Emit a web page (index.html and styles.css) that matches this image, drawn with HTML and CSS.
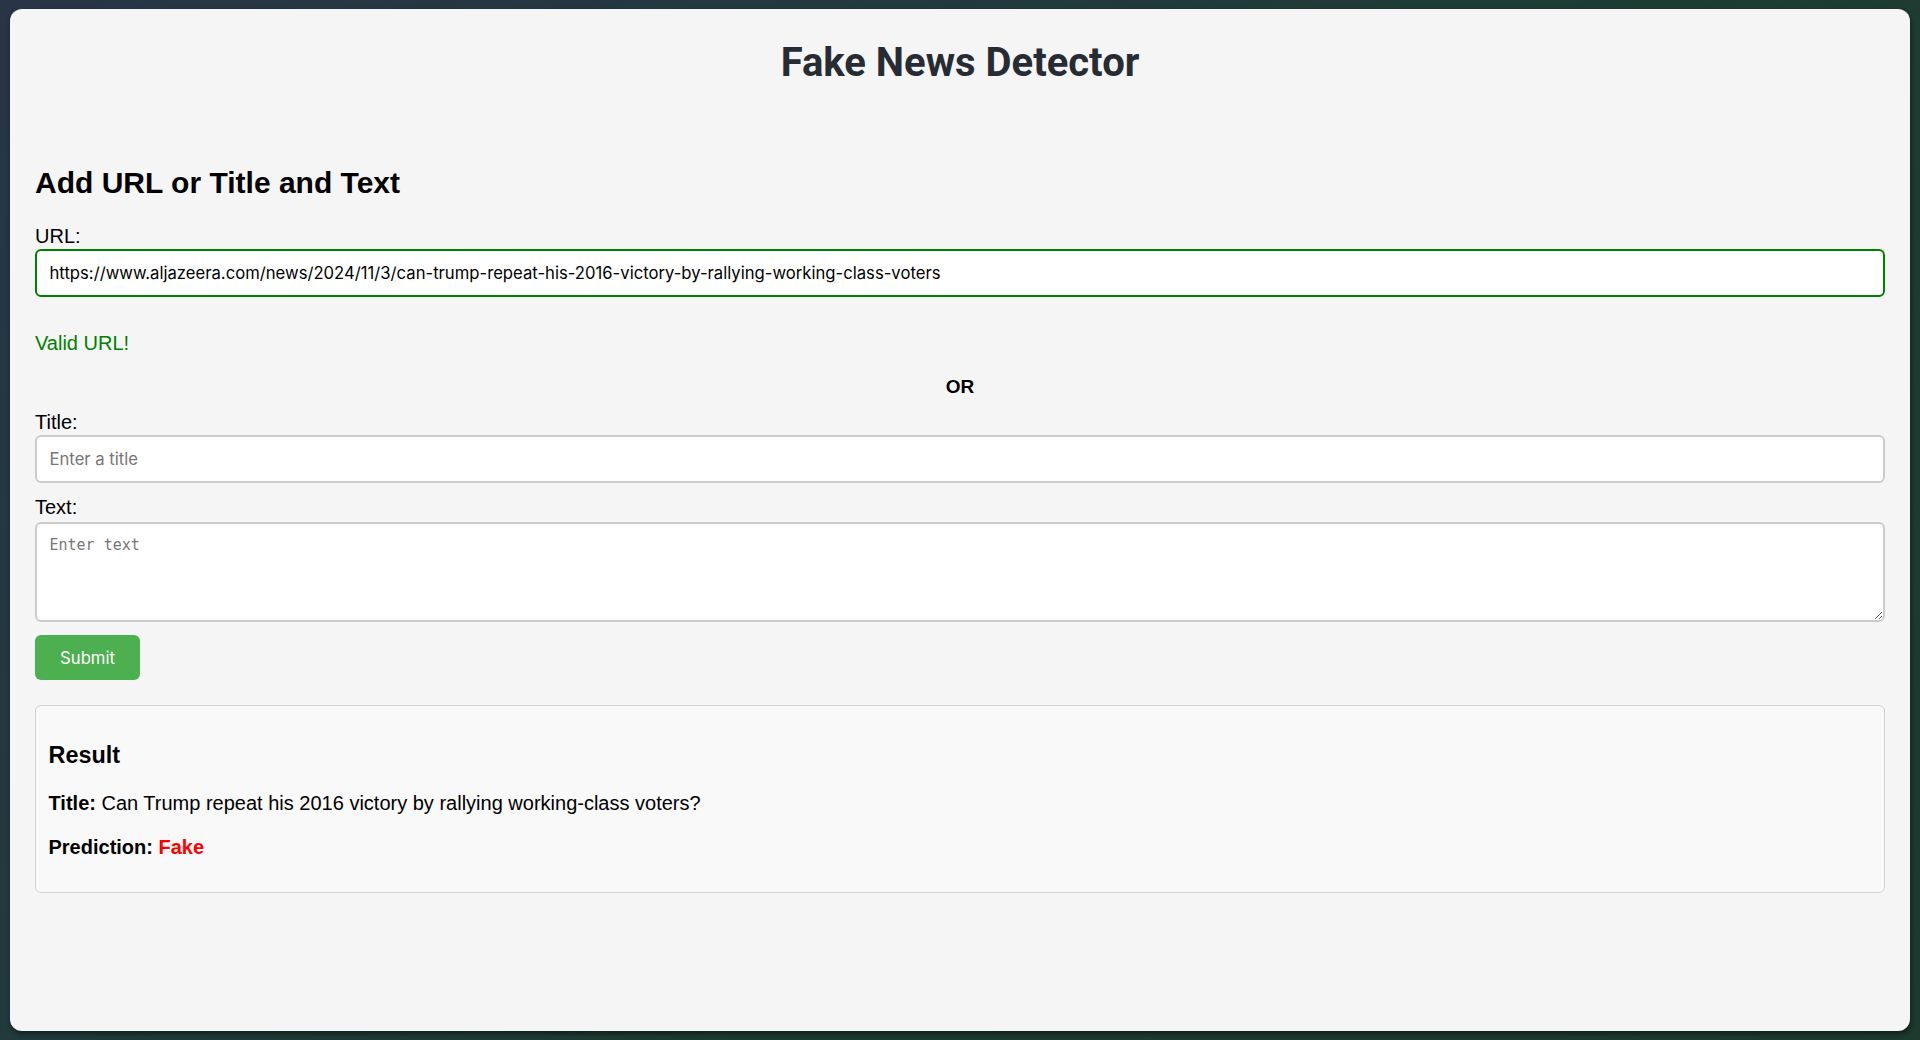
FILE: index.html
```html
<!DOCTYPE html>
<html lang="en">
<head>
<meta charset="utf-8">
<title>Fake News Detector</title>
<link rel="stylesheet" href="styles.css">
</head>
<body>
<div class="app">
  <h1 class="app-title">Fake News Detector</h1>
  <h2 class="section-title">Add URL or Title and Text</h2>
  <form class="news-form">
    <label class="field-label" for="url">URL:</label>
    <input class="text-input url-input" id="url" type="text" value="https://www.aljazeera.com/news/2024/11/3/can-trump-repeat-his-2016-victory-by-rallying-working-class-voters">
    <p class="valid-msg">Valid URL!</p>
    <div class="or-sep">OR</div>
    <label class="field-label label-title" for="title">Title:</label>
    <input class="text-input title-input" id="title" type="text" placeholder="Enter a title">
    <label class="field-label label-text" for="text">Text:</label>
    <textarea class="text-area" id="text" placeholder="Enter text"></textarea>
    <button class="submit-btn" type="button">Submit</button>
  </form>
  <div class="result">
    <h3 class="result-title">Result</h3>
    <p class="result-line"><strong>Title:</strong> Can Trump repeat his 2016 victory by rallying working-class voters?</p>
    <p class="result-line"><strong>Prediction:</strong> <span class="fake">Fake</span></p>
  </div>
</div>
</body>
</html>
```

FILE: styles.css
```css
html, body {
  margin: 0;
  padding: 0;
  height: 100%;
}

body {
  background: linear-gradient(135deg, #293447 0%, #213a3c 35%, #1e3c31 60%, #1d3a2f 100%);
  font-family: "Liberation Sans", Arial, sans-serif;
  font-size: 20px;
  color: #000;
  padding: 9px 10px;
  box-sizing: border-box;
}

.app {
  height: 1022px;
  box-sizing: border-box;
  background: #f5f5f5;
  border-radius: 12px;
  box-shadow: 1px 3px 5px rgba(0, 0, 0, 0.45);
  padding: 0 25px;
  overflow: hidden;
}

.app-title {
  font-family: Roboto, sans-serif;
  font-weight: 700;
  font-size: 40px;
  line-height: normal;
  text-align: center;
  color: #272b34;
  margin: 30px 0 0;
}

.section-title {
  font-size: 30px;
  font-weight: 700;
  line-height: normal;
  margin: 80px 0 25px;
}

.news-form {
  display: flex;
  flex-direction: column;
}

.field-label {
  display: block;
  font-size: 20px;
  line-height: 23px;
  margin: 0 0 1px;
}

.text-input {
  box-sizing: border-box;
  width: 100%;
  height: 48px;
  margin: 0;
  padding: 0 12.5px;
  border: 2px solid #cccccc;
  border-radius: 6px;
  background: #fff;
  font-family: Inter, "Noto Sans", sans-serif;
  font-size: 16.67px;
  color: #000;
  outline: none;
}

.text-input::placeholder {
  color: #767676;
}

.url-input {
  border-color: #008000;
}

.valid-msg {
  color: #008000;
  font-size: 20px;
  line-height: 23px;
  margin: 35px 0 0;
}

.or-sep {
  text-align: center;
  font-weight: 700;
  font-size: 19px;
  line-height: 21px;
  margin-top: 21px;
}

.label-title {
  margin-top: 14px;
  margin-bottom: 1px;
}

.label-text {
  margin-top: 13px;
  margin-bottom: 3px;
}

.text-area {
  box-sizing: border-box;
  width: 100%;
  height: 100px;
  margin: 0;
  padding: 12px 12.5px;
  border: 2px solid #cccccc;
  border-radius: 6px;
  background: #fff;
  font-family: "DejaVu Sans Mono", monospace;
  font-size: 15px;
  outline: none;
}

.text-area::placeholder {
  color: #767676;
}

.submit-btn {
  align-self: flex-start;
  margin-top: 13px;
  width: 105px;
  height: 45px;
  padding: 0;
  border: none;
  border-radius: 6px;
  background: #4caf50;
  color: #fff;
  font-family: Inter, "Noto Sans", sans-serif;
  font-size: 16.67px;
  cursor: pointer;
}

.result {
  margin-top: 25px;
  background: #f9f9f9;
  border: 1px solid #d2d2d2;
  border-radius: 6px;
  padding: 12.5px;
}

.result-title {
  font-size: 23.4px;
  font-weight: 700;
  line-height: normal;
  margin: 23.4px 0;
}

.result-line {
  font-size: 20px;
  line-height: 23.5px;
  margin: 20px 0;
}

.fake {
  color: #ff0000;
  font-weight: 700;
}
```
